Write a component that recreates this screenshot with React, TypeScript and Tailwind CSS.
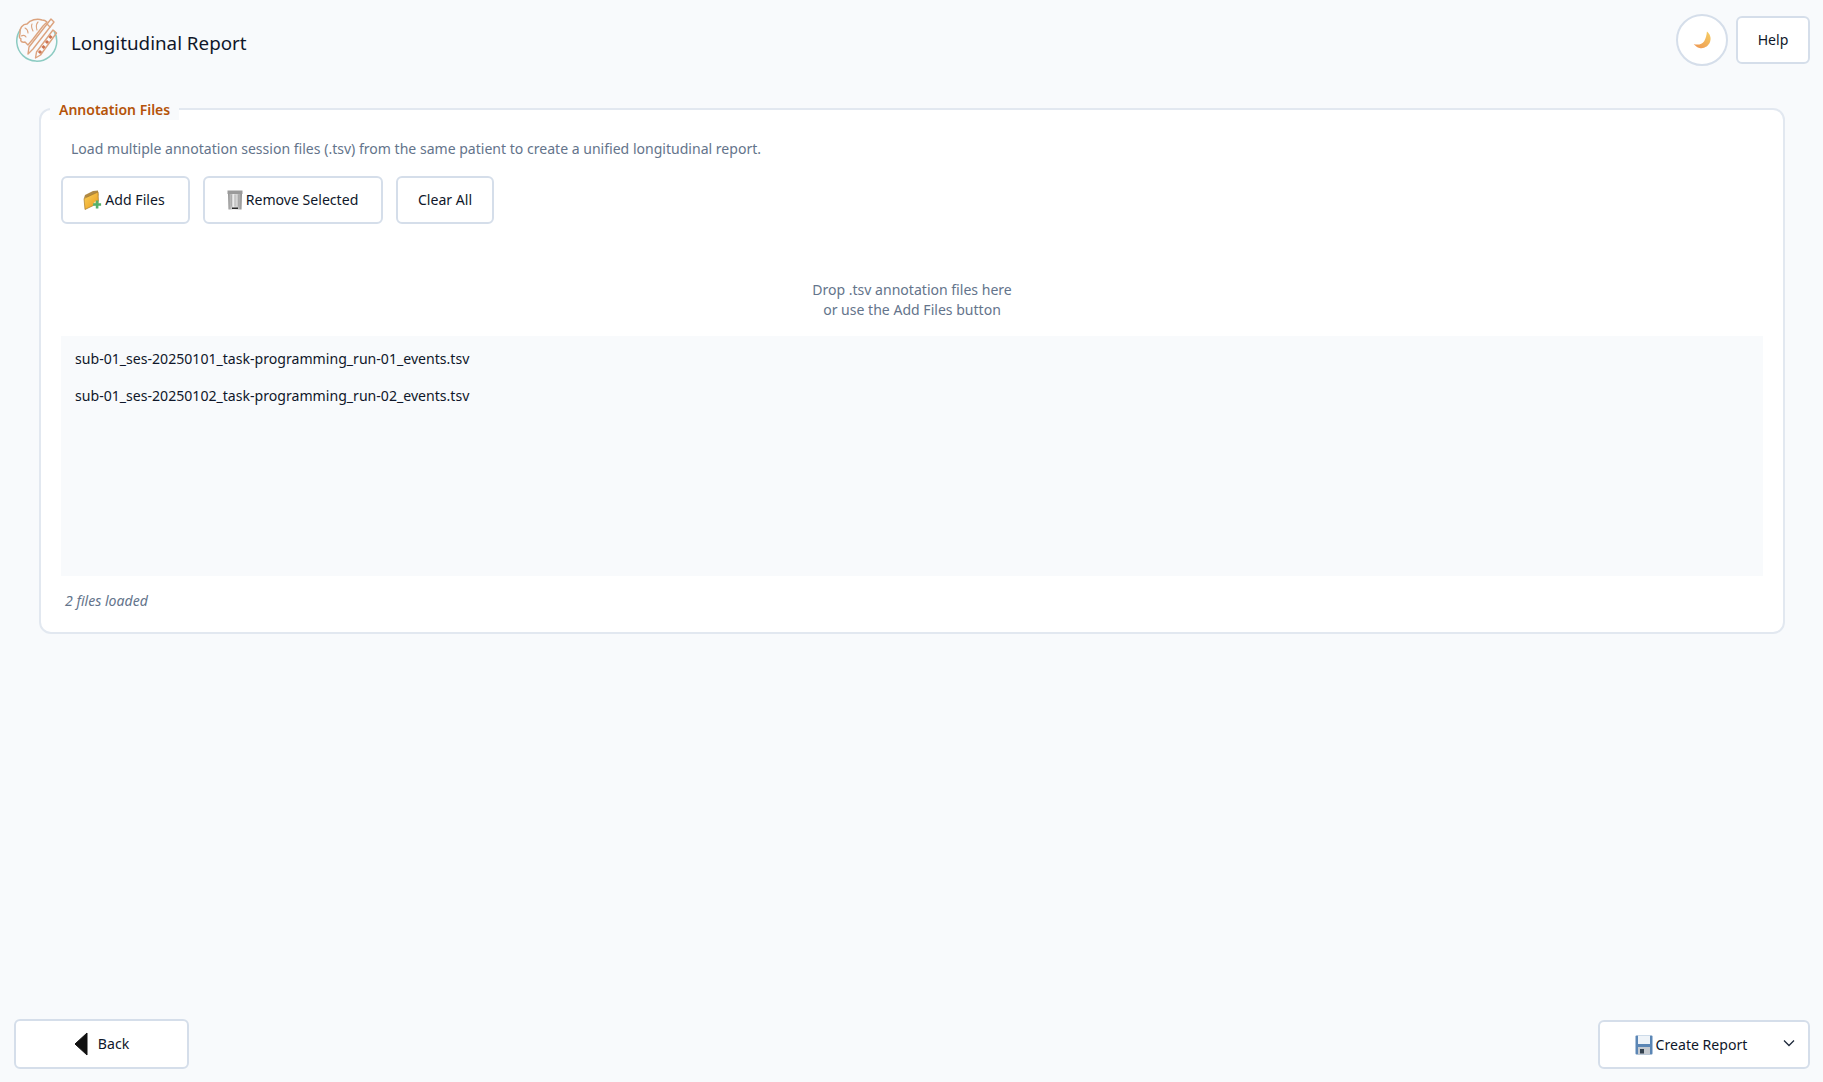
import React from "react";

const FONT = "font-['Noto_Sans','Open_Sans',sans-serif]";

function Logo() {
  return (
    <svg width="44" height="46" viewBox="0 0 44 46" fill="none">
      <path d="M5.500 13.500A20 20 0 1 0 39 15" stroke="#8ccbc2" strokeWidth="1.500" />
      <g stroke="#dca37e" strokeWidth="1.400" strokeLinecap="round" strokeLinejoin="round">
        <path d="M5 18c-1-6 3-10 7-10 3-4 10-6 15-4 2 0 4 1 5 2l-4 4-10 13-5 6-3-3c-3 1-5-1-4-3-2-1-2-3-1-5z" />
        <path d="M10 12c2 1 3 3 3 5M6 20c2-1 4-1 5 1M17 8c-1 2 0 5 1 7M23 6c-2 2-2 5-1 8" strokeWidth="1.100" />
        <path d="M36 3l3 3-21 27-5 5 1-7z" />
        <path d="M32 8l3 3" />
        <path d="M38 14l3.500 3-16 22-5 3 1-6z" />
      </g>
      <g fill="#cd7350">
        <rect x="34" y="19.500" width="3" height="3" transform="rotate(45 35.500 21)" />
        <rect x="30.500" y="24.500" width="3" height="3" transform="rotate(45 32 26)" />
        <rect x="27" y="29.500" width="3" height="3" transform="rotate(45 28.500 31)" />
        <rect x="23.500" y="34.500" width="3" height="3" transform="rotate(45 25 36)" />
      </g>
    </svg>
  );
}

function Moon() {
  return (
    <svg width="19" height="19" viewBox="0 0 18 18">
      <defs>
        <linearGradient id="moonG" x1="1" y1="0" x2="0.2" y2="1">
          <stop offset="0" stopColor="#f6cf63" />
          <stop offset="1" stopColor="#ee9a54" />
        </linearGradient>
      </defs>
      <path d="M13.200 0.500c3 2.500 4.300 6 3 9.800-1.400 4.300-6 6.800-10 5.800C4 15.500 2 14 0.700 12.200c3.900 1.300 7.800.4 9.900-2.600 1.500-2.400 2.300-5.300 2.600-9.100z" fill="url(#moonG)" />
    </svg>
  );
}

function FolderAdd() {
  return (
    <svg width="19" height="20" viewBox="0 0 19 20">
      <defs>
        <linearGradient id="folderG" x1="0" y1="0" x2="1" y2="1">
          <stop offset="0" stopColor="#fbd25c" />
          <stop offset="1" stopColor="#e99a1c" />
        </linearGradient>
      </defs>
      <path d="M1 8l1-3 8-4 5-.5.500 5z" fill="#b08a46" />
      <path d="M1 8.500l14-6.500.500 11L2 19.500z" fill="url(#folderG)" stroke="#a77b2a" strokeWidth="0.700" />
      <circle cx="14" cy="14.500" r="3.600" fill="#fff" opacity="0.500" />
      <path d="M12.800 10.500h2.600v2.700h2.700v2.600h-2.700v2.700h-2.600v-2.700h-2.700v-2.600h2.700z" fill="#54b06a" />
    </svg>
  );
}

function Trash() {
  return (
    <svg width="16" height="20" viewBox="0 0 16 20">
      <defs>
        <linearGradient id="trashG" x1="0" y1="0" x2="1" y2="0">
          <stop offset="0" stopColor="#8d8d8d" />
          <stop offset="0.400" stopColor="#ececec" />
          <stop offset="0.650" stopColor="#cfcfcf" />
          <stop offset="1" stopColor="#8a8a8a" />
        </linearGradient>
      </defs>
      <rect x="0.500" y="0.500" width="15" height="3.500" fill="#9a9a9a" />
      <path d="M1 4h14l-.5 15.500h-13z" fill="url(#trashG)" />
      <path d="M4.500 4.500v12M8 4.500v12M11.500 4.500v12" stroke="#a5a5a5" strokeWidth="0.800" />
      <rect x="5" y="17.500" width="6" height="1.500" fill="#2b2b2b" />
    </svg>
  );
}

function Floppy() {
  return (
    <svg width="18" height="20" viewBox="0 0 18 20">
      <rect x="0.500" y="0.500" width="17" height="19" rx="1" fill="#5b86b5" />
      <rect x="3" y="0.500" width="12" height="8.500" fill="#eef3f8" />
      <rect x="3" y="12" width="12" height="7.500" fill="#c4c9cf" />
      <rect x="5" y="14" width="4" height="4.500" fill="#33414f" />
    </svg>
  );
}

function BackArrow() {
  return (
    <svg width="14" height="24" viewBox="0 0 14 24">
      <path d="M13 1v22L1 12z" fill="#111" stroke="#111" strokeLinejoin="round" />
    </svg>
  );
}

const btn =
  "flex items-center justify-center bg-white border-2 border-[#d5deea] rounded-[6px] text-[#0f172a] text-[14.100px]";

export default function App() {
  return (
    <div className={`w-[1823px] h-[1082px] bg-[#f8fafc] flex flex-col overflow-hidden ${FONT}`}>
      <header className="flex items-start justify-between pl-[15px] pr-[13px] pt-[14px] h-[108px] shrink-0">
        <div className="flex items-center gap-[12px] mt-[2px]">
          <Logo />
          <span className="text-[18.800px] text-[#0f172a] leading-none mt-[8px]">Longitudinal Report</span>
        </div>
        <div className="flex items-center gap-[8px]">
          <button className="w-[52px] h-[52px] rounded-full bg-white border-2 border-[#d5deea] flex items-center justify-center">
            <Moon />
          </button>
          <button className={`${btn} w-[74px] h-[48px]`}>Help</button>
        </div>
      </header>

      <main className="flex-1 pl-[39px] pr-[38px]">
        <section className="relative h-[526px] bg-white border-2 border-[#e2e8f0] rounded-[12px] pl-[20px] pr-[20px]">
          <div className="absolute left-[9px] -top-[10px] bg-[#f8fafc] px-[9px] h-[20px] flex items-center text-[14px] font-semibold text-[#b45309] leading-none">
            Annotation Files
          </div>
          <p className="pt-[29px] pl-[10px] text-[14.050px] leading-[20px] text-[#64748b]">
            Load multiple annotation session files (.tsv) from the same patient to create a unified longitudinal report.
          </p>
          <div className="flex gap-[13px] mt-[17px]">
            <button className={`${btn} w-[129px] h-[48px] gap-[3px] pr-[3px]`}><FolderAdd />Add Files</button>
            <button className={`${btn} w-[180px] h-[48px] gap-[3px] pr-[1px]`}><Trash />Remove Selected</button>
            <button className={`${btn} w-[98px] h-[48px]`}>Clear All</button>
          </div>
          <div className="mt-[56px] text-center text-[14.050px] leading-[20px] text-[#64748b]">
            <div>Drop .tsv annotation files here</div>
            <div>or use the Add Files button</div>
          </div>
          <div className="mt-[16px] h-[240px] bg-[#f8fafc] px-[14px] pt-[4px] text-[14.100px] text-[#0f172a]">
            <div className="h-[37px] flex items-center">sub-01_ses-20250101_task-programming_run-01_events.tsv</div>
            <div className="h-[37px] flex items-center">sub-01_ses-20250102_task-programming_run-02_events.tsv</div>
          </div>
          <p className="mt-[15px] pl-[4px] text-[14.100px] italic leading-[20px] text-[#64748b]">2 files loaded</p>
        </section>
      </main>

      <footer className="flex items-end justify-between pl-[14px] pr-[13px] pb-[13px] shrink-0">
        <button className={`${btn} w-[175px] h-[50px] gap-[10px]`}><BackArrow />Back</button>
        <button className={`${btn} relative w-[212px] h-[49px] gap-[3px] pr-[26px]`}>
          <Floppy />Create Report
          <svg className="absolute right-[13px] top-[15px]" width="12" height="12" viewBox="0 0 12 12" fill="none">
            <path d="M1 3.500l5 5 5-5" stroke="#1e293b" strokeWidth="1.300" />
          </svg>
        </button>
      </footer>
    </div>
  );
}
